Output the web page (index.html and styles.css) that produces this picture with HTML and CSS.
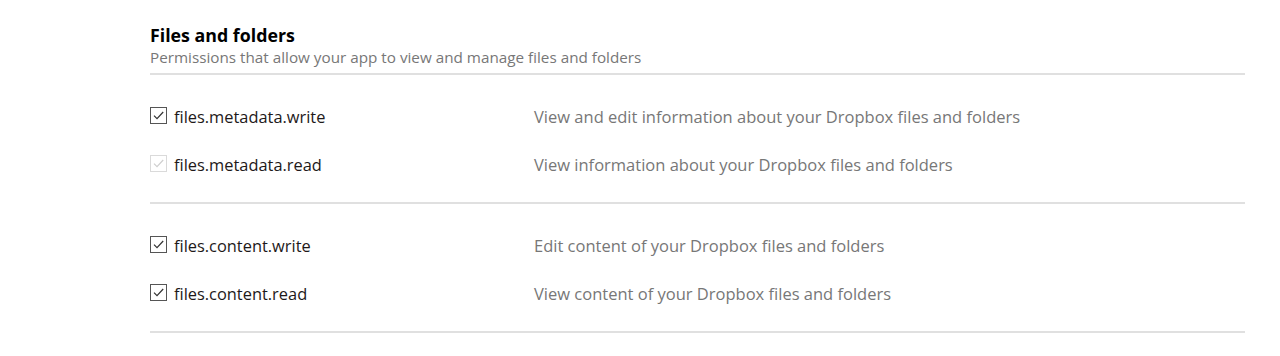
FILE: index.html
```html
<!DOCTYPE html>
<html lang="en">
<head>
<meta charset="utf-8">
<title>Files and folders</title>
<link rel="stylesheet" href="styles.css">
</head>
<body>
<section class="scopes">
  <header class="scopes-header">
    <h2 class="scopes-title">Files and folders</h2>
    <p class="scopes-sub">Permissions that allow your app to view and manage files and folders</p>
  </header>
  <div class="group">
    <div class="row">
      <label class="scope">
        <span class="box"><svg viewBox="0 0 15 15"><path d="M3 7.6l3 3L12.2 4"/></svg></span>
        <span class="name">files.metadata.write</span>
      </label>
      <span class="desc">View and edit information about your Dropbox files and folders</span>
    </div>
    <div class="row">
      <label class="scope">
        <span class="box disabled"><svg viewBox="0 0 15 15"><path d="M3 7.6l3 3L12.2 4"/></svg></span>
        <span class="name">files.metadata.read</span>
      </label>
      <span class="desc">View information about your Dropbox files and folders</span>
    </div>
  </div>
  <div class="group">
    <div class="row">
      <label class="scope">
        <span class="box"><svg viewBox="0 0 15 15"><path d="M3 7.6l3 3L12.2 4"/></svg></span>
        <span class="name">files.content.write</span>
      </label>
      <span class="desc">Edit content of your Dropbox files and folders</span>
    </div>
    <div class="row">
      <label class="scope">
        <span class="box"><svg viewBox="0 0 15 15"><path d="M3 7.6l3 3L12.2 4"/></svg></span>
        <span class="name">files.content.read</span>
      </label>
      <span class="desc">View content of your Dropbox files and folders</span>
    </div>
  </div>
</section>
</body>
</html>
```
FILE: styles.css
```css
html, body {
  margin: 0;
  padding: 0;
  background: #fff;
}
body {
  font-family: "Open Sans", "Liberation Sans", sans-serif;
  color: #1e1919;
}
.scopes {
  width: 1095px;
  margin-left: 150px;
  padding-top: 23px;
}
.scopes-header {
  border-bottom: 2px solid #e0e0e0;
  padding-bottom: 6px;
}
.scopes-title {
  margin: 0;
  font-size: 17.8px;
  line-height: 24px;
  font-weight: 700;
  color: #000;
}
.scopes-sub {
  margin: 0;
  font-size: 15.25px;
  line-height: 20px;
  color: #777;
}
.group {
  border-bottom: 2px solid #e0e0e0;
  padding: 17px 0 14px;
}
.row {
  display: flex;
  align-items: center;
  height: 48px;
}
.scope {
  display: flex;
  align-items: center;
  width: 384px;
  font-size: 16.4px;
  color: #1e1919;
}
.box {
  width: 15px;
  height: 15px;
  border: 1px solid #555;
  margin-right: 7px;
  margin-top: -2px;
  display: inline-flex;
}
.box svg {
  width: 15px;
  height: 15px;
  fill: none;
  stroke: #333;
  stroke-width: 1.2;
}
.box.disabled {
  border-color: #dadada;
}
.box.disabled svg {
  stroke: #cfcfcf;
}
.desc {
  font-size: 16.5px;
  color: #777;
}
```
